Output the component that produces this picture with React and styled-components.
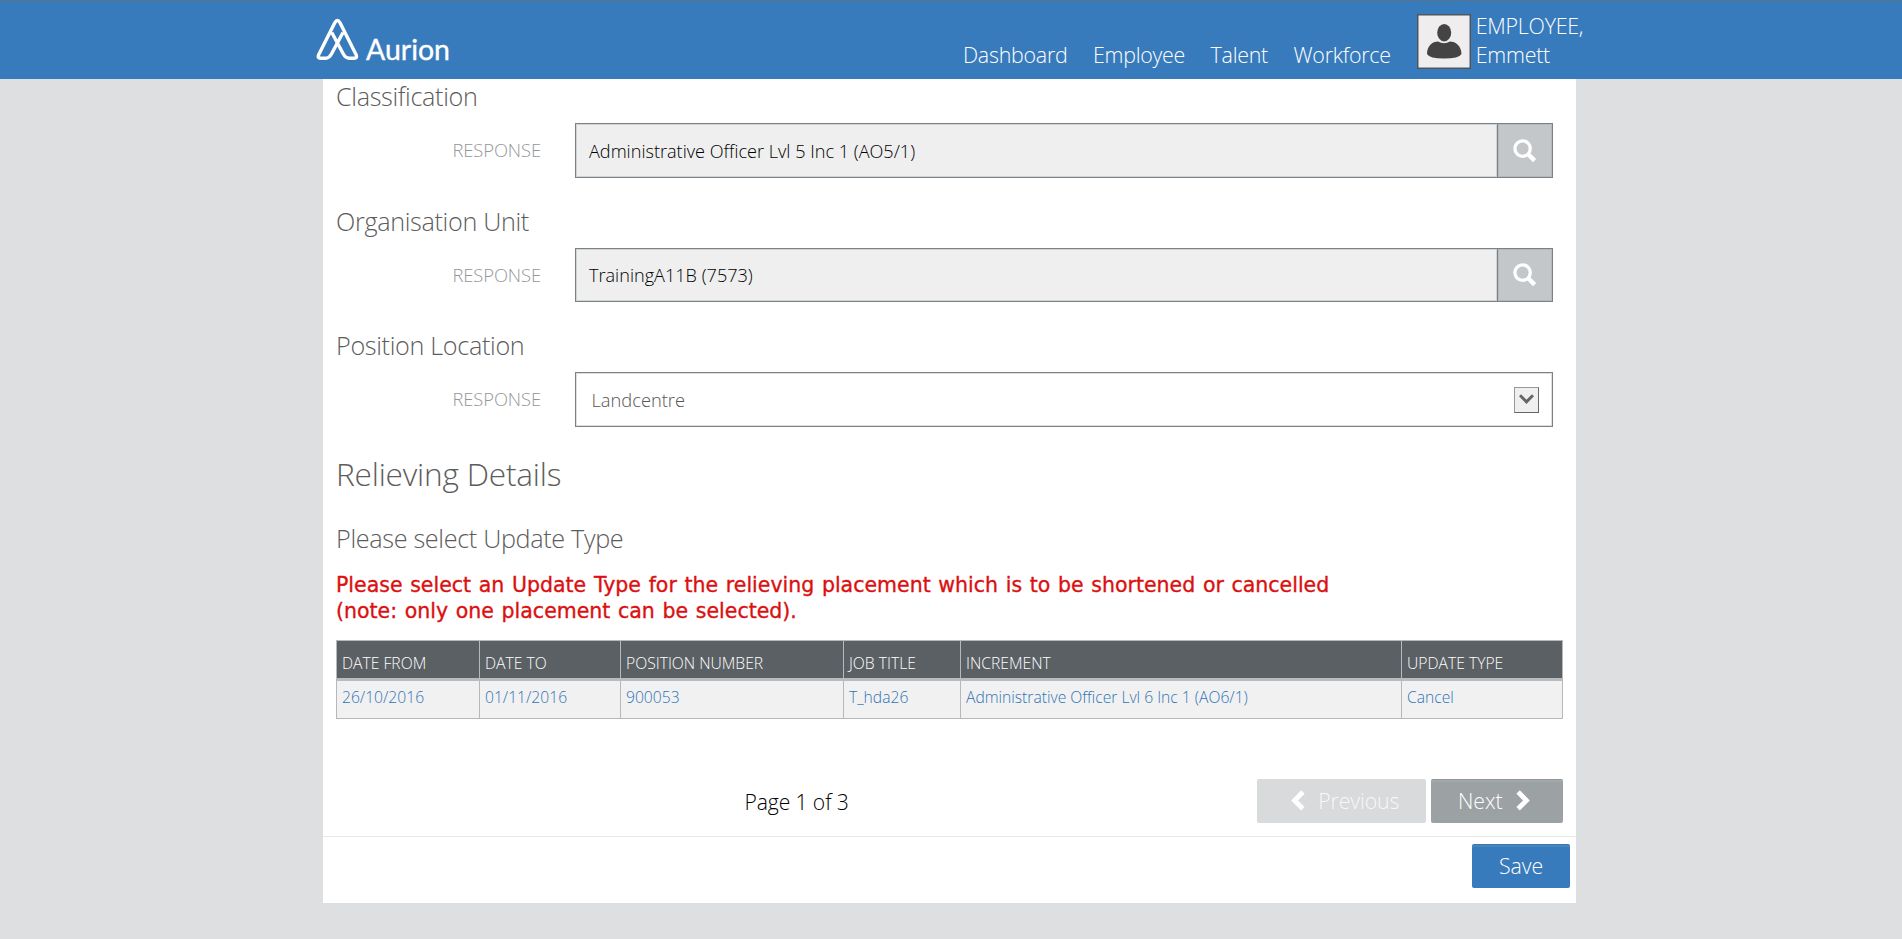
import React from "react";
import styled, { createGlobalStyle } from "styled-components";

const GlobalStyle = createGlobalStyle`
  *, *::before, *::after { box-sizing: border-box; }
  body {
    margin: 0;
    min-height: 100vh;
    background: #dedfe1;
    color: #000;
    font-family: "Open Sans", "Liberation Sans", sans-serif;
    font-weight: 300;
  }
`;

const TopBar = styled.header`
  height: 79px;
  background: #387bbc;
  border-top: 1.5px solid #577389;
  padding-left: 316px;
  display: flex;
  align-items: flex-start;
`;

const Logo = styled.svg`
  display: block;
  width: 138px;
  height: 60px;
  margin-top: 9px;
`;

const Nav = styled.nav`
  display: flex;
  gap: 25.5px;
  margin: 39px 0 0 509px;
  white-space: nowrap;
`;

const NavLink = styled.a`
  color: #fff;
  font-size: 21.4px;
  letter-spacing: -0.25px;
  line-height: 30px;
`;

const User = styled.div`
  display: flex;
  gap: 5px;
  margin: 10px 0 0 26px;
`;

const Avatar = styled.svg`
  display: block;
  width: 54px;
  height: 55px;
  margin-top: 3px;
`;

const UserName = styled.div`
  width: 130px;
  color: #fff;
  font-size: 21.4px;
  letter-spacing: -0.25px;
  line-height: 29px;
`;

const Page = styled.main`
  width: 1253px;
  height: 824px;
  margin-left: 323px;
  background: #fff;
`;

const Content = styled.div`
  height: 757px;
  padding: 0 12px 0 13px;
`;

const Section = styled.section`
  margin-bottom: 26px;
`;

const Heading = styled.h3`
  margin: 0;
  color: #5c5c5c;
  font-weight: 300;
  font-size: 25.2px;
  letter-spacing: -0.33px;
  line-height: 34px;
`;

const MajorHeading = styled.h2`
  margin: -1px 0 25px;
  color: #5c5c5c;
  font-weight: 300;
  font-size: 31.6px;
  letter-spacing: -0.2px;
  line-height: 44px;
`;

const FieldRow = styled.div`
  display: flex;
  align-items: center;
  height: ${(p) => p.$height}px;
  margin: 10px 11px 0 0;
`;

const FieldLabel = styled.label`
  width: 239px;
  padding: 0 34px 1px 0;
  text-align: right;
  color: #94979a;
  font-size: 18.4px;
  letter-spacing: -0.1px;
  line-height: 26px;
`;

const Control = styled.div`
  flex: 1;
  height: 100%;
  display: flex;
  align-items: center;
  border: 1px solid #7b8185;
`;

const LookupValue = styled.div`
  flex: 1;
  height: 100%;
  display: flex;
  align-items: center;
  padding: 0 0 0 13px;
  background: #efefef;
  box-shadow: inset 0 0 0 1px #cfd4d6;
  font-size: 18.1px;
`;

const LookupButton = styled.button`
  width: 55px;
  height: 100%;
  padding: 0 0 0 15px;
  border: 0;
  border-left: 1px solid #7b8185;
  background: #c3c7ca;
  box-shadow: inset 0 0 0 1px #b4b9bc;
  svg { display: block; }
`;

const SelectValue = styled.div`
  flex: 1;
  height: 100%;
  display: flex;
  align-items: center;
  justify-content: space-between;
  padding: 0 13px 0 15.5px;
  box-shadow: inset 0 0 0 1px #dbdfe1;
  color: #555;
  font-size: 18.3px;
`;

const SelectArrow = styled.span`
  width: 25px;
  height: 26px;
  display: grid;
  place-items: center;
  border: 1px solid #999;
  border-right-color: #666;
  border-bottom-color: #666;
  background: #efefef;
`;

const Notice = styled.p`
  margin: 17px 0 16px;
  color: #db1010;
  font-family: "DejaVu Sans", sans-serif;
  font-weight: 400;
  font-size: 20.5px;
  line-height: 26px;
  word-spacing: 1.15px;
  -webkit-text-stroke: 0.35px #db1010;
`;

const Grid = styled.div`
  width: 1227px;
  border: 1px solid #b5b9bb;
`;

const GridRow = styled.div`
  display: grid;
  grid-template-columns: 142px 141px 223px 117px 441px 1fr;
`;

const HeadCell = styled.div`
  height: 37px;
  padding: 6px 0 0 5px;
  display: flex;
  align-items: center;
  background: #5b6064;
  color: #fff;
  font-size: 15.7px;
  & + & { border-left: 1px solid #b5b9bb; padding-left: 5px; }
`;

const Band = styled.div`
  height: 3px;
  background: #b9bcbe;
`;

const BodyCell = styled.div`
  height: 37px;
  padding: 0 0 6px 5px;
  display: flex;
  align-items: center;
  background: #f1f1f1;
  color: #2f73b5;
  font-size: 15.65px;
  & + & { border-left: 1px solid #b5b9bb; padding-left: 5px; }
`;

const Pager = styled.div`
  display: flex;
  align-items: center;
  height: 44px;
  margin-top: 60px;
`;

const PageCount = styled.div`
  width: 921px;
  padding-left: 408.5px;
  font-size: 21.1px;
  letter-spacing: -0.1px;
`;

const Button = styled.button`
  width: ${(p) => p.$width}px;
  height: 44px;
  display: flex;
  align-items: center;
  justify-content: center;
  gap: 13.5px;
  padding: 0 ${(p) => p.$padRight || 0}px 1px ${(p) => p.$padLeft || 0}px;
  border: 0;
  border-radius: 2px;
  background: ${(p) => p.$tone};
  color: ${(p) => (p.disabled ? "rgba(255,255,255,.85)" : "#fff")};
  box-shadow: ${(p) => (p.disabled ? "none" : "inset 0 1px 0 rgba(0,0,0,.1), inset 0 3px 0 rgba(255,255,255,.08)")};
  font: 300 21.3px "Open Sans", "Liberation Sans", sans-serif;
  letter-spacing: -0.1px;
  & + & { margin-left: 5px; }
  svg { display: block; }
`;

const Footer = styled.footer`
  display: flex;
  justify-content: flex-end;
  border-top: 1px solid #e4ebed;
  padding: 7px 6px 0 0;
`;

const SearchIcon = () => (
  <svg width="24" height="24" viewBox="0 0 24 24" fill="none" stroke="#fff">
    <circle cx="9.6" cy="9.6" r="7.7" strokeWidth="3.3" />
    <path d="M15 15L21.6 21.6" strokeWidth="4.4" />
  </svg>
);

const Chevron = ({ left }) => (
  <svg width="14" height="21" viewBox="0 0 14 21" fill="#fff">
    <path d={left ? "M10.2 0.3L13.6 3.7L7 10.4L13.6 17.1L10.2 20.5L0.2 10.4Z" : "M3.8 0.3L0.4 3.7L7 10.4L0.4 17.1L3.8 20.5L13.8 10.4Z"} />
  </svg>
);

const LookupField = ({ title, value, height }) => (
  <Section>
    <Heading>{title}</Heading>
    <FieldRow $height={height}>
      <FieldLabel>RESPONSE</FieldLabel>
      <Control>
        <LookupValue>{value}</LookupValue>
        <LookupButton aria-label="Search"><SearchIcon /></LookupButton>
      </Control>
    </FieldRow>
  </Section>
);

const columns = ["DATE FROM", "DATE TO", "POSITION NUMBER", "JOB TITLE", "INCREMENT", "UPDATE TYPE"];
const placement = ["26/10/2016", "01/11/2016", "900053", "T_hda26", "Administrative Officer Lvl 6 Inc 1 (AO6/1)", "Cancel"];

export default function App() {
  return (
    <>
      <GlobalStyle />
      <TopBar>
        <Logo viewBox="6 0 138 60">
          <path
            d="M33 22.5L21.6 43.8Q19.2 48.3 15.5 48.3H10.8Q7 48.3 8.8 44.6L24.9 12.6Q27.4 8.4 29.9 12.6L46 44.6Q47.8 48.3 44 48.3H39.3Q35.6 48.3 33.2 43.8L21.8 22.5"
            fill="none" stroke="#fff" strokeWidth="3.4" strokeLinejoin="round"
          />
          <text x="56" y="49.6" textLength="84" lengthAdjust="spacingAndGlyphs" fill="#fff" stroke="#fff" strokeWidth="0.35" fontFamily="Lato, sans-serif" fontWeight="400" fontSize="29">Aurion</text>
        </Logo>
        <Nav>
          <NavLink>Dashboard</NavLink>
          <NavLink>Employee</NavLink>
          <NavLink>Talent</NavLink>
          <NavLink>Workforce</NavLink>
        </Nav>
        <User>
          <Avatar viewBox="0 0 54 55">
            <rect x="0.75" y="0.75" width="52.5" height="53.5" fill="#efedee" stroke="#50565c" strokeWidth="1.5" />
            <path d="M10 40C10 32 15.5 27.5 21 27.5Q27 31 33 27.5C38.5 27.5 44.5 32 44.5 40Q42 44.5 27 44.5Q12.5 44.5 10 40Z" fill="#444" />
            <ellipse cx="27.2" cy="18.7" rx="7" ry="8.7" fill="#444" />
          </Avatar>
          <UserName>EMPLOYEE,<br />Emmett</UserName>
        </User>
      </TopBar>
      <Page>
        <Content>
          <LookupField title="Classification" value="Administrative Officer Lvl 5 Inc 1 (AO5/1)" height={55} />
          <LookupField title="Organisation Unit" value="TrainingA11B (7573)" height={54} />
          <Section>
            <Heading>Position Location</Heading>
            <FieldRow $height={55}>
              <FieldLabel>RESPONSE</FieldLabel>
              <Control>
                <SelectValue>
                  Landcentre
                  <SelectArrow>
                    <svg width="15" height="11" viewBox="0 0 15 11" fill="none" stroke="#666" strokeWidth="3">
                      <path d="M1 1.2L7.5 7.9L14 1.2" />
                    </svg>
                  </SelectArrow>
                </SelectValue>
              </Control>
            </FieldRow>
          </Section>
          <MajorHeading>Relieving Details</MajorHeading>
          <Heading>Please select Update Type</Heading>
          <Notice>
            Please select an Update Type for the relieving placement which is to be shortened or cancelled
            <br />
            (note: only one placement can be selected).
          </Notice>
          <Grid>
            <GridRow>{columns.map((c) => <HeadCell key={c}>{c}</HeadCell>)}</GridRow>
            <Band />
            <GridRow>{placement.map((v) => <BodyCell key={v}>{v}</BodyCell>)}</GridRow>
          </Grid>
          <Pager>
            <PageCount>Page 1 of 3</PageCount>
            <Button $width={169} $tone="#d8dadb" $padLeft={7} disabled><Chevron left />Previous</Button>
            <Button $width={132} $tone="#9ca1a4" $padRight={6}>Next<Chevron /></Button>
          </Pager>
        </Content>
        <Footer>
          <Button $width={98} $tone="#387bbc">Save</Button>
        </Footer>
      </Page>
    </>
  );
}
